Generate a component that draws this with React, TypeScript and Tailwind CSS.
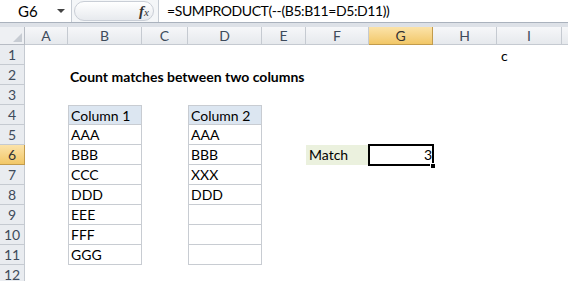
import React from "react";

const cols = [
  { name: "A", w: 43 },
  { name: "B", w: 74 },
  { name: "C", w: 46 },
  { name: "D", w: 74 },
  { name: "E", w: 44 },
  { name: "F", w: 63 },
  { name: "G", w: 64 },
  { name: "H", w: 64 },
  { name: "I", w: 65 },
];

const col1 = ["AAA", "BBB", "CCC", "DDD", "EEE", "FFF", "GGG"];
const col2 = ["AAA", "BBB", "XXX", "DDD", "", "", ""];
const rows = [1, 2, 3, 4, 5, 6, 7, 8, 9, 10, 11, 12];

const font = { fontFamily: "Lato, 'Liberation Sans', sans-serif" };

function TableCell({ text, head, top }: { text: string; head?: boolean; top?: boolean }) {
  return (
    <div
      className={
        "h-full border-x border-b border-[#c8ccd2] pl-[2px] text-[14px] leading-[19px] text-black " +
        (top ? "border-t " : "") +
        (head ? "bg-[#dce6f1]" : "bg-white")
      }
    >
      {text}
    </div>
  );
}

function cellFor(row: number, col: string) {
  if (row === 1 && col === "I") {
    return <div className="pl-[4px] text-[14px] leading-[22px]">c</div>;
  }
  if (row === 2 && col === "B") {
    return (
      <div className="whitespace-nowrap pl-[2px] text-[14px] font-bold leading-[24px] text-black">
        Count matches between two columns
      </div>
    );
  }
  if (row >= 4 && row <= 11 && col === "B") {
    return <TableCell text={row === 4 ? "Column 1" : col1[row - 5]} head={row === 4} top={row === 4} />;
  }
  if (row >= 4 && row <= 11 && col === "D") {
    return <TableCell text={row === 4 ? "Column 2" : col2[row - 5]} head={row === 4} top={row === 4} />;
  }
  if (row === 6 && col === "F") {
    return <div className="h-full bg-[#ebf1de] pl-[3px] text-[14px] leading-[20px] text-black">Match</div>;
  }
  if (row === 6 && col === "G") {
    return (
      <div className="relative h-full">
        <div className="absolute -left-[1px] -top-[1px] h-[22px] w-[66px] border-2 border-black bg-white text-right text-[14px] leading-[18px]">
          3
        </div>
        <div className="absolute -right-[3px] bottom-[-4px] h-[6px] w-[6px] border border-white bg-black" />
      </div>
    );
  }
  return null;
}

export default function App() {
  return (
    <div className="h-[281px] w-[568px] overflow-hidden bg-white text-black" style={font}>
      {/* formula bar */}
      <div className="flex h-[23px] border-b border-[#aab2bd] bg-white">
        <div className="relative flex w-[72px] items-center border-r border-[#c6ccd4]">
          <span className="pl-[18px] text-[15px] leading-none">G6</span>
          <span className="absolute left-[57px] top-[9px] h-0 w-0 border-x-[4px] border-t-[4px] border-x-transparent border-t-[#444]" />
        </div>
        <div className="flex w-[86px] items-center bg-[#f4f6f8] pl-[2px] pr-[4px]">
          <div className="flex h-[20px] flex-1 items-center justify-end rounded-full border border-[#c9ced6] bg-gradient-to-b from-white to-[#e7eaee] pr-[4px]">
            <span
              className="text-[15px] italic leading-none text-[#333]"
              style={{ fontFamily: "'Liberation Serif', serif" }}
            >
              <b>f</b>
              <span className="text-[11px]">x</span>
            </span>
          </div>
        </div>
        <div className="flex flex-1 items-center border-l border-[#c6ccd4] pl-[8px] text-[14px] leading-none tracking-[-0.4px]">
          =SUMPRODUCT(--(B5:B11=D5:D11))
        </div>
      </div>
      <div className="h-[4px] bg-[#dde1e7]" />

      {/* sheet */}
      <div className="grid grid-cols-[25px_43px_74px_46px_74px_44px_63px_64px_64px_65px_1fr] grid-rows-[18px_repeat(12,20px)]">
        <div className="relative border-b border-r border-[#b7bcc4] bg-[#eef0f3]">
          <span className="absolute bottom-[2px] right-[2px] h-0 w-0 border-b-[9px] border-l-[9px] border-b-[#c7ccd3] border-l-transparent" />
        </div>
        {cols.map((c) => (
          <div
            key={c.name}
            className={
              "border-b border-r text-center text-[14px] leading-[17px] " +
              (c.name === "G"
                ? "border-[#c29b4c] bg-gradient-to-b from-[#fbe3a9] to-[#f2c766] text-[#333]"
                : "border-[#c5cad1] bg-gradient-to-b from-[#f6f7f9] to-[#e6e9ed] text-[#3e4b5b]")
            }
          >
            {c.name}
          </div>
        ))}
        <div className="border-b border-[#c5cad1] bg-gradient-to-b from-[#f6f7f9] to-[#e6e9ed]" />

        {rows.map((r) => (
          <React.Fragment key={r}>
            <div
              className={
                "border-b border-r text-center text-[14px] leading-[19px] " +
                (r === 6
                  ? "border-[#c29b4c] bg-gradient-to-b from-[#fbe3a9] to-[#f2c766] text-[#333]"
                  : "border-[#c5cad1] bg-[#e9ecf0] text-[#3e4b5b]")
              }
            >
              {r}
            </div>
            {cols.map((c) => (
              <div key={c.name} className="min-w-0">
                {cellFor(r, c.name)}
              </div>
            ))}
            <div />
          </React.Fragment>
        ))}
      </div>
    </div>
  );
}
